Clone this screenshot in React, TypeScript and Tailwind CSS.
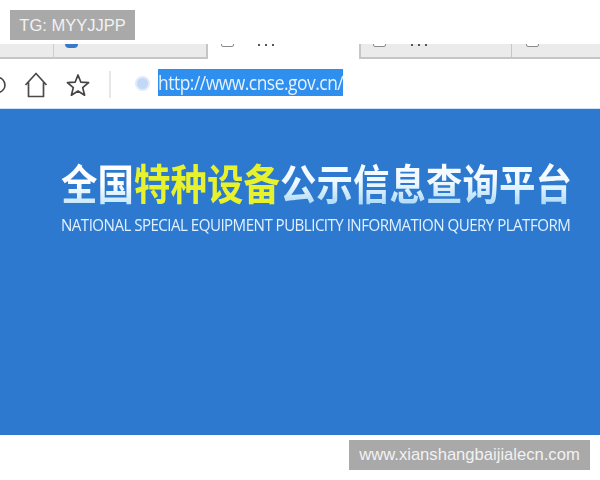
import { useState } from 'react'

const cjk = "font-['Noto_Sans_CJK_SC','Noto_Sans',sans-serif]"

function TabMarks({ left, dots }: { left: string; dots?: string }) {
  return (
    <>
      <div className={`absolute ${left} -top-[4px] w-[13px] h-[7px] rounded-b-[2px] border border-[#8a8a8a] bg-white`} />
      {dots && (
        <div className={`absolute ${dots} top-0 flex gap-[5px]`}>
          <span className="w-[2px] h-[2px] bg-[#555]" />
          <span className="w-[2px] h-[2px] bg-[#555]" />
          <span className="w-[2px] h-[2px] bg-[#555]" />
        </div>
      )}
    </>
  )
}

export default function App() {
  const [url] = useState('http://www.cnse.gov.cn/')

  return (
    <div className="relative w-[600px] h-[480px] overflow-hidden bg-white flex flex-col font-['Liberation_Sans',sans-serif]">
      <div className="h-11 shrink-0" />

      {/* tabs */}
      <div className="h-[15px] shrink-0 flex">
        <div className="w-[54px] h-full bg-[#ebebeb] border-b-2 border-[#c6c6c6] border-r border-r-[#cfcfcf]" />
        <div className="w-[154px] h-full bg-[#ebebeb] border-b-2 border-r-2 border-[#c6c6c6] relative overflow-hidden">
          <div className="absolute left-[11px] -top-[3px] w-[13px] h-[7px] rounded-b-[4px] bg-[#3a78c8]" />
        </div>
        <div className="w-[151px] h-full bg-white relative overflow-hidden">
          <TabMarks left="left-[13px]" dots="left-[50px]" />
        </div>
        <div className="w-[153px] h-full bg-[#ebebeb] border-b-2 border-l-2 border-r border-[#c6c6c6] relative overflow-hidden">
          <TabMarks left="left-[12px]" dots="left-[50px]" />
        </div>
        <div className="flex-1 h-full bg-[#ebebeb] border-b-2 border-[#c6c6c6] relative overflow-hidden">
          <TabMarks left="left-[14px]" />
        </div>
      </div>

      {/* address bar */}
      <div className="h-[50px] shrink-0 flex items-center border-b border-[#cfe3f7]">
        <svg width="6" height="24" viewBox="0 0 6 24" className="shrink-0 mt-[3px]">
          <path d="M0 4.5a7.5 7.5 0 0 1 0 15" transform="translate(-2.5 0)" fill="none" stroke="#444" strokeWidth="1.6" />
        </svg>
        <svg width="24" height="26" viewBox="0 0 24 26" className="ml-[18px] shrink-0 mt-[3px]">
          <path d="M1.5 13 12 1.5 22.5 13M4.5 10.5V24.5H19.5V10.5" fill="none" stroke="#4a4a4a" strokeWidth="1.7" strokeLinejoin="round" />
        </svg>
        <svg width="24" height="24" viewBox="0 0 24 24" className="ml-[18px] shrink-0 mt-[3px]">
          <path d="M12 2 14.9 9.2 22.6 9.7 16.7 14.6 18.6 22.2 12 18 5.4 22.2 7.3 14.6 1.4 9.7 9.1 9.2Z" fill="none" stroke="#444" strokeWidth="1.7" strokeLinejoin="round" />
        </svg>
        <div className="ml-[19px] w-[2px] h-[27px] bg-[#e6e6e6] shrink-0 mt-[2px]" />
        <div className="ml-[24px] w-[15px] h-[15px] rounded-full bg-[#c3d8f7] border-2 border-[#e0eafa] shrink-0" />
        <div className="ml-[8px] w-[185px] h-[27px] bg-[#2f8fee] mb-[2px] overflow-hidden">
          <span className="inline-block origin-left scale-x-[0.87] text-[#e6f3ff] text-[20px] leading-[27px] whitespace-nowrap font-['Open_Sans',sans-serif] tracking-[-0.55px]">
            {url}
          </span>
        </div>
      </div>

      {/* banner */}
      <div className="flex-1 bg-[#2e79d0] pl-[61px] pt-[47px]">
        <div className={`${cjk} font-bold text-[36.5px] leading-[54px] whitespace-nowrap flex scale-y-[1.14] origin-center`}>
          <span className="bg-gradient-to-b from-white via-white to-[#a9dcf8] bg-clip-text text-transparent">全国</span>
          <span className="text-[#e8f22c]">特种设备</span>
          <span className="bg-gradient-to-b from-white via-[#eef8ff] to-[#8fcdf2] bg-clip-text text-transparent">公示信息查询平台</span>
        </div>
        <div className="mt-[3px] text-[17px] leading-6 whitespace-nowrap text-[#dff1ff] font-['Open_Sans',sans-serif] tracking-[-0.6px] origin-left scale-x-[0.889]">
          NATIONAL SPECIAL EQUIPMENT PUBLICITY INFORMATION QUERY PLATFORM
        </div>
      </div>

      <div className="h-[45px] shrink-0" />

      {/* watermarks */}
      <div className="absolute left-[10px] top-[10px] w-[125px] h-[30px] bg-[#a9a9a9] text-[#f2f2f2] text-[16.5px] leading-[30px] text-center">
        TG: MYYJJPP
      </div>
      <div className="absolute left-[349px] top-[440px] w-[241px] h-[30px] bg-[#a9a9a9] text-[#f2f2f2] text-[16.6px] leading-[30px] text-center whitespace-nowrap">
        www.xianshangbaijialecn.com
      </div>
    </div>
  )
}
